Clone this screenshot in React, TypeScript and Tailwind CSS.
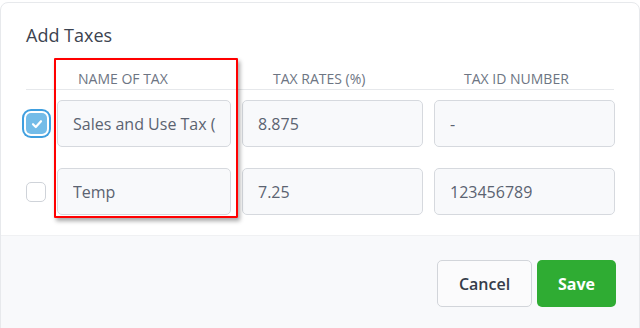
import React from "react";

type TaxRow = {
  name: string;
  rate: string;
  taxId: string;
  checked: boolean;
};

const rows: TaxRow[] = [
  { name: "Sales and Use Tax (NY)", rate: "8.875", taxId: "-", checked: true },
  { name: "Temp", rate: "7.25", taxId: "123456789", checked: false },
];

const Field = ({ value }: { value: string }) => (
  <div className="flex h-[47px] items-center overflow-hidden whitespace-nowrap rounded-[5px] border border-[#d6d9de] bg-[#f8f9fb] pl-[15px] pr-[14px] text-[16px] text-[#5b6371]">
    <span className="overflow-hidden">{value}</span>
  </div>
);

const CheckBox = ({ checked }: { checked: boolean }) =>
  checked ? (
    <div className="flex h-[21px] w-[21px] items-center justify-center rounded-[5px] bg-[#74bce8] ring-2 ring-[#3f9fdf] ring-offset-[2px]">
      <svg width="12" height="10" viewBox="0 0 12 10" fill="none">
        <path
          d="M2 5.2 L4.8 8 L10 2.2"
          stroke="white"
          strokeWidth="2.2"
          strokeLinecap="round"
          strokeLinejoin="round"
        />
      </svg>
    </div>
  ) : (
    <div className="h-[20px] w-[20px] rounded-[5px] border border-[#cfd3d9] bg-white" />
  );

const App: React.FC = () => {
  return (
    <div
      className="h-[328px] w-[640px] overflow-hidden bg-white pt-[2px]"
      style={{ fontFamily: "'Open Sans', 'Liberation Sans', sans-serif" }}
    >
      <div className="h-[340px] overflow-hidden rounded-[8px] border border-[#e7e9ec] bg-white">
        <div className="relative px-[25px] pb-[20px]">
          <h2 className="pt-[19px] text-[18px] leading-[26px] text-[#3c4350]">
            Add Taxes
          </h2>

          <div className="mt-[21px] grid grid-cols-[20px_174px_181px_181px] gap-x-[11px] border-b border-[#e6e8eb] pb-[0px] text-[14px] uppercase leading-[20px] text-[#6d7583]">
            <div />
            <div className="pl-[21px]">Name of Tax</div>
            <div className="pl-[31px]">Tax Rates (%)</div>
            <div className="pl-[30px]">Tax ID Number</div>
          </div>

          <div className="mt-[10px] flex flex-col gap-[21px]">
            {rows.map((row) => (
              <div
                key={row.name}
                className="grid grid-cols-[20px_174px_181px_181px] items-center gap-x-[11px]"
              >
                <CheckBox checked={row.checked} />
                <Field value={row.name} />
                <Field value={row.rate} />
                <Field value={row.taxId} />
              </div>
            ))}
          </div>

          {/* annotation highlight */}
          <div className="absolute left-[53px] top-[55px] h-[160px] w-[184px] rounded-[1px] border-2 border-[#f00] shadow-[2px_3px_4px_rgba(0,0,0,0.35)]" />
        </div>

        <div className="flex h-[120px] justify-end gap-[5px] border-t border-[#f0f1f3] bg-[#f8f9fb] pr-[23px] pt-[24px]">
          <button className="h-[47px] w-[95px] rounded-[5px] border border-[#d2d5da] bg-[#fbfbfc] text-[16px] font-semibold text-[#353c49]">
            Cancel
          </button>
          <button className="h-[47px] w-[79px] rounded-[5px] bg-[#2fac33] text-[16px] font-bold text-white">
            Save
          </button>
        </div>
      </div>
    </div>
  );
};

export default App;
